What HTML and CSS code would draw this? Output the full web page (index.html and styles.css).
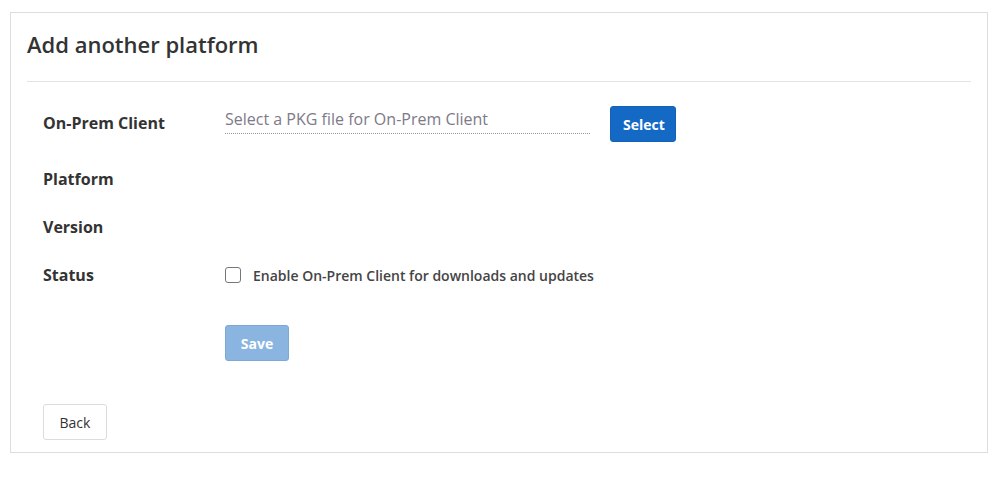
FILE: index.html
```html
<!DOCTYPE html>
<html>
<head>
<meta charset="utf-8">
<link rel="stylesheet" href="styles.css">
</head>
<body>
<div class="panel">
  <div class="header">
    <h1 class="title">Add another platform</h1>
  </div>
  <div class="form">
    <div class="row row-file">
      <div class="label">On-Prem Client</div>
      <div class="value">
        <div class="file-input">Select a PKG file for On-Prem Client</div>
        <button class="btn btn-primary">Select</button>
      </div>
    </div>
    <div class="row row-plain row-first">
      <div class="label">Platform</div>
      <div class="value"></div>
    </div>
    <div class="row row-plain">
      <div class="label">Version</div>
      <div class="value"></div>
    </div>
    <div class="row row-plain">
      <div class="label">Status</div>
      <div class="value">
        <label class="check"><span class="box"></span><span class="check-text">Enable On-Prem Client for downloads and updates</span></label>
      </div>
    </div>
    <div class="row row-save">
      <div class="label"></div>
      <div class="value"><button class="btn btn-disabled">Save</button></div>
    </div>
  </div>
  <div class="footer">
    <button class="btn btn-default">Back</button>
  </div>
</div>
</body>
</html>
```
FILE: styles.css
```css
html, body {
  margin: 0;
  padding: 0;
  background: #fff;
  font-family: "Open Sans", "Liberation Sans", sans-serif;
  color: #333;
}
body {
  padding: 12px 19px 0 10px;
}
.panel {
  border: 1px solid #dddddd;
  height: 441px;
  box-sizing: border-box;
  padding: 0 16px 0 16px;
}
.header {
  border-bottom: 1px solid #e3e3e3;
  height: 69px;
  box-sizing: border-box;
  display: flex;
  align-items: center;
}
.title {
  margin: 0;
  font-size: 22px;
  font-weight: 600;
  color: #333;
  padding-bottom: 6px;
}
.form {
  padding: 24px 16px 0 16px;
}
.row {
  display: grid;
  grid-template-columns: 182px 1fr;
  align-items: center;
}
.label {
  font-size: 16px;
  font-weight: 700;
  color: #333;
}
.row-file {
  height: 36px;
}
.row-file .label {
  margin-top: -2px;
}
.row-file .value {
  display: flex;
  align-items: center;
}
.file-input {
  width: 365px;
  font-size: 16px;
  color: #7e7a88;
  border-bottom: 1px dotted #9a9a9a;
  padding-bottom: 3px;
  line-height: 22px;
  margin-top: -6px;
}
.row-plain {
  height: 48px;
}
.row-first {
  margin-top: 13px;
}
.btn {
  font-family: inherit;
  font-size: 14px;
  font-weight: 700;
  height: 36px;
  padding: 0 12px;
  border-radius: 3px;
  border: 1px solid transparent;
  cursor: pointer;
}
.btn-primary {
  background: #1469c4;
  color: #fff;
  border-color: #1462b8;
  margin-left: 20px;
  width: 66px;
}
.btn-disabled {
  background: #8ab5e1;
  color: #fff;
  border-color: #7ea8d6;
  width: 64px;
}
.btn-default {
  background: #fff;
  color: #333;
  border-color: #dcdcdc;
  font-weight: 400;
  width: 64px;
}
.check {
  display: flex;
  align-items: center;
}
.box {
  width: 14px;
  height: 14px;
  border: 1px solid #777;
  border-radius: 3px;
  background: #fff;
}
.check-text {
  margin-left: 12px;
  font-size: 14px;
  font-weight: 600;
  color: #444;
}
.row-save {
  margin-top: 26px;
}
.footer {
  padding: 43px 0 0 16px;
}
```
